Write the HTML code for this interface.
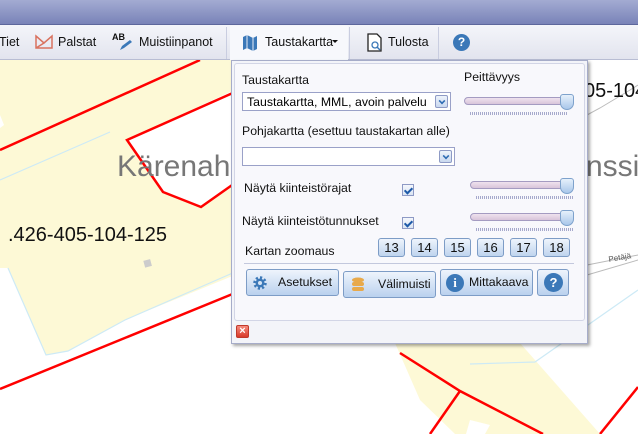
<!DOCTYPE html>
<html><head><meta charset="utf-8"><style>
*{margin:0;padding:0;box-sizing:border-box}
body{width:638px;height:434px;overflow:hidden;position:relative;font-family:"Liberation Sans","DejaVu Sans",sans-serif;background:#fff}
.abs{position:absolute}
#title{left:0;top:0;width:638px;height:25px;background:linear-gradient(#a3abd2,#7983b8);border-bottom:1px solid #5d679c}
#tb{left:0;top:25px;width:638px;height:35px;background:linear-gradient(#f4f5fa,#e2e4ee);border-bottom:1px solid #b8bdd3;font-size:12.5px;color:#111}
.ti{position:absolute;top:10px}
.sep{position:absolute;top:2px;width:1px;height:32px;background:#c9cde0}
#panel{left:231px;top:60px;width:357px;height:284px;background:#f3f4f9;border:1px solid #a6acc9;box-shadow:2px 2px 3px rgba(0,0,0,.35)}
#inner{left:2px;top:2px;width:351px;height:258px;background:#f8f8fc;border:1px solid #d2d5e6;border-radius:3px}
.lbl{position:absolute;font-size:12.3px;color:#111}
.sel{position:absolute;height:19px;background:#fff;border:1px solid #9aa1c8}
.dd{position:absolute;right:2px;top:2px;width:13px;height:13px;border:1px solid #8e9ac5;border-radius:2px;background:linear-gradient(#eef3fb,#c9d8ef)}
.dd:after{content:"";position:absolute;left:3px;top:2px;width:4px;height:4px;border-right:2px solid #2f6cb3;border-bottom:2px solid #2f6cb3;transform:rotate(45deg) scale(.8)}
.cb{position:absolute;width:12px;height:12px;border:1px solid #8e9ac5;background:linear-gradient(#f4f7fc,#dbe5f3)}
.cb:after{content:"";position:absolute;left:3px;top:1px;width:3px;height:6px;border-right:2px solid #1e5aa8;border-bottom:2px solid #1e5aa8;transform:rotate(45deg)}
.sl{position:absolute;width:103px;height:8px;border:1px solid #a49bc1;border-radius:4px;background:linear-gradient(#efe2ee,#d8c5da)}
.knob{position:absolute;width:14px;height:16px;border:1px solid #7ea2cc;border-radius:3px 3px 7px 7px;background:linear-gradient(#e6f0fb,#a9c7ea)}
.tick{position:absolute;height:3px;width:98px;background:repeating-linear-gradient(90deg,#a6a9cc 0 1px,transparent 1px 2px)}
.zb{position:absolute;top:237px;width:27px;height:19px;border:1px solid #7d9cc6;border-radius:3px;background:linear-gradient(#eef4fc,#bfd4ee);font-size:13px;text-align:center;line-height:17px;color:#111}
.bb{position:absolute;top:268px;height:27px;border:1px solid #7d9cc6;border-radius:3px;background:linear-gradient(#eef4fc,#bad1ee);font-size:12.3px;color:#111;line-height:25px}
.ic{position:absolute;border-radius:50%;background:#3b78b8;color:#fff;font-weight:bold;text-align:center}
</style></head><body>
<svg class="abs" style="left:0;top:60px" width="638" height="374" viewBox="0 60 638 374">
<polygon points="0,60 235,60 235,275 125,320 68,351 46,355 8,268 0,268" fill="#fdf9d6"/>
<polygon points="0,115 4,125 0,128" fill="#fff"/>
<polygon points="127,140 230,92 235,92 235,182 201,207 163,192" fill="#fff"/>
<polyline points="8,268 46,355 68,351 125,320 235,272" fill="none" stroke="#cdeaf6" stroke-width="1.2"/>
<polyline points="0,180 110,132" fill="none" stroke="#cdeaf6" stroke-width="1.2"/>
<polyline points="0,150 200,60" fill="none" stroke="#f00" stroke-width="2.5"/>
<polyline points="235,92 127,140 163,192 201,207 235,183" fill="none" stroke="#f00" stroke-width="2.5"/>
<polyline points="0,389 235,293" fill="none" stroke="#f00" stroke-width="2.5"/>
<polygon points="395,343 520,343 600,434 455,434 420,400" fill="#fdf9d6"/>
<polygon points="470,420 490,425 485,434 466,434" fill="#fff"/>
<polyline points="400,353 460,391 543,434" fill="none" stroke="#f00" stroke-width="2.5"/>
<polyline points="460,391 430,434" fill="none" stroke="#f00" stroke-width="2.5"/>
<polyline points="638,387 600,434" fill="none" stroke="#f00" stroke-width="2.5"/>
<polyline points="470,364 535,362 638,290" fill="none" stroke="#cdeaf6" stroke-width="1.2"/>
<polyline points="587,115 600,108 630,90 638,85" fill="none" stroke="#bbb" stroke-width="1"/>
<polyline points="587,265 638,255" fill="none" stroke="#bbb" stroke-width="1"/>
<polyline points="587,275 638,260" fill="none" stroke="#bbb" stroke-width="1"/>
<text x="117" y="176" font-size="30" fill="#777" font-family="Liberation Sans">Kärenah</text>
<text x="586" y="176" font-size="30" fill="#777" font-family="Liberation Sans">nssi</text>
<text x="8" y="241" font-size="20" fill="#111" font-family="Liberation Sans">.426-405-104-125</text>
<text x="584" y="97" font-size="20" fill="#111" font-family="Liberation Sans">05-104</text>
<text x="609" y="262" font-size="8" fill="#555" font-family="Liberation Sans" transform="rotate(-10 609 262)">Petäjä</text>
<rect x="144" y="260" width="7" height="7" fill="#ccc" transform="rotate(-15 147 263)"/>
</svg>
<div id="title" class="abs"></div>
<div id="tb" class="abs">
 <span class="ti" style="left:-1px">Tiet</span>
 <svg class="abs" style="left:35px;top:9px" width="18" height="16"><path d="M1 2 L1 14 L17 14 L17 2 L9 9 Z M1 2 L9 9 L1 14" fill="none" stroke="#d9725f" stroke-width="1.5"/></svg>
 <span class="ti" style="left:58px">Palstat</span>
 <span class="abs" style="left:112px;top:7px;font-size:9px;font-weight:bold">AB</span>
 <svg class="abs" style="left:118px;top:14px" width="16" height="12"><path d="M2 11 L4 7 L12 1 L14 3 L6 9 Z" fill="#3b78b8"/></svg>
 <span class="ti" style="left:139px">Muistiinpanot</span>
 <div class="sep" style="left:226px"></div>
 <div class="abs" style="left:230px;top:1px;width:118px;height:34px;background:#f7f8fc"></div>
 <svg class="abs" style="left:242px;top:9px" width="16" height="18"><path d="M1 3 L5 1 L11 4 L15 2 L15 15 L11 17 L5 14 L1 16 Z" fill="#3b78b8"/><path d="M5 1 L5 14 M11 4 L11 17" stroke="#e8eef8" stroke-width="1"/></svg>
 <span class="ti" style="left:265px">Taustakartta</span>
 <span class="abs" style="left:332px;top:15px;width:0;height:0;border-left:3px solid transparent;border-right:3px solid transparent;border-top:3px solid #111"></span>
 <div class="sep" style="left:349px"></div>
 <svg class="abs" style="left:367px;top:8px" width="16" height="19"><path d="M1 1 L10 1 L14 5 L14 18 L1 18 Z" fill="#fff" stroke="#222" stroke-width="1.3"/><circle cx="8" cy="12" r="3" fill="none" stroke="#3b78b8" stroke-width="1.3"/><path d="M10 14 L13 17" stroke="#3b78b8" stroke-width="1.5"/></svg>
 <span class="ti" style="left:388px">Tulosta</span>
 <div class="sep" style="left:438px"></div>
 <div class="ic" style="left:453px;top:9px;width:17px;height:17px;font-size:12px;line-height:17px">?</div>
</div>
<div id="panel" class="abs">
 <div id="inner" class="abs"></div>
 <span class="lbl" style="left:10px;top:12px">Taustakartta</span>
 <span class="lbl" style="left:232px;top:9px">Peittävyys</span>
 <div class="sel" style="left:10px;top:31px;width:209px"><span style="position:absolute;left:4px;top:2px;font-size:12.3px">Taustakartta, MML, avoin palvelu</span><div class="dd"></div></div>
 <div class="sl" style="left:232px;top:36px"></div><div class="knob" style="left:328px;top:33px"></div><div class="tick" style="left:238px;top:51px"></div>
 <span class="lbl" style="left:10px;top:63px">Pohjakartta (esettuu taustakartan alle)</span>
 <div class="sel" style="left:10px;top:86px;width:213px"><div class="dd"></div></div>
 <span class="lbl" style="left:12px;top:120px">Näytä kiinteistörajat</span>
 <div class="cb" style="left:170px;top:123px"></div>
 <div class="sl" style="left:238px;top:120px"></div><div class="knob" style="left:328px;top:117px"></div><div class="tick" style="left:244px;top:135px"></div>
 <span class="lbl" style="left:10px;top:153px">Näytä kiinteistötunnukset</span>
 <div class="cb" style="left:170px;top:156px"></div>
 <div class="sl" style="left:238px;top:152px"></div><div class="knob" style="left:328px;top:149px"></div><div class="tick" style="left:244px;top:167px"></div>
 <span class="lbl" style="left:13px;top:183px">Kartan zoomaus</span>
 <div class="zb" style="left:146px;top:177px">13</div>
 <div class="zb" style="left:179px;top:177px">14</div>
 <div class="zb" style="left:212px;top:177px">15</div>
 <div class="zb" style="left:245px;top:177px">16</div>
 <div class="zb" style="left:278px;top:177px">17</div>
 <div class="zb" style="left:311px;top:177px">18</div>
 <div class="abs" style="left:12px;top:202px;width:330px;height:1px;background:#c3c8dd"></div>
 <div class="bb" style="left:14px;top:208px;width:93px"><svg class="abs" style="left:5px;top:5px" width="16" height="16" viewBox="0 0 16 16"><circle cx="8" cy="8" r="5" fill="none" stroke="#3b78b8" stroke-width="3.5" stroke-dasharray="2 1.9"/><circle cx="8" cy="8" r="4.5" fill="#3b78b8"/><circle cx="8" cy="8" r="2" fill="#d6e4f4"/></svg><span style="position:absolute;left:31px">Asetukset</span></div>
 <div class="bb" style="left:111px;top:210px;width:93px"><svg class="abs" style="left:7px;top:5px" width="14" height="16"><ellipse cx="7" cy="3" rx="6" ry="2.5" fill="#e8a94a"/><rect x="1" y="5" width="12" height="4" rx="2" fill="#e8a94a"/><rect x="1" y="10" width="12" height="4" rx="2" fill="#e8a94a"/></svg><span style="position:absolute;left:34px">Välimuisti</span></div>
 <div class="bb" style="left:208px;top:208px;width:93px"><div class="ic" style="left:5px;top:4px;width:18px;height:18px;font-size:13px;line-height:18px;font-family:'Liberation Serif',serif">i</div><span style="position:absolute;left:28px">Mittakaava</span></div>
 <div class="bb" style="left:305px;top:208px;width:32px"><div class="ic" style="left:6px;top:3px;width:19px;height:19px;font-size:13px;line-height:19px">?</div></div>
 <div class="abs" style="left:4px;top:264px;width:13px;height:13px;border:1px solid #c0392b;border-radius:2px;background:linear-gradient(#f58b7e,#d83a2a);color:#fff;font-size:11px;line-height:11px;text-align:center;font-weight:bold">×</div>
</div>
</body></html>
